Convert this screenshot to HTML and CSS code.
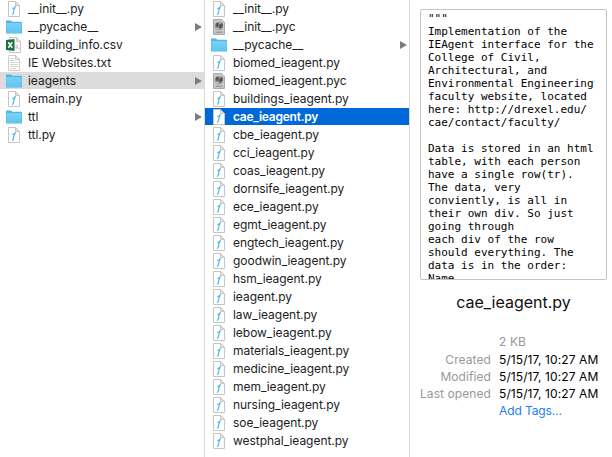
FILE: index.html
```
<!DOCTYPE html>
<html lang="en">
<head>
<meta charset="utf-8">
<title>ieagents</title>
<link rel="stylesheet" href="styles.css">
</head>
<body>
<svg class="defs" aria-hidden="true">
  <linearGradient id="blue" x1="0" y1="0" x2="0" y2="1"><stop offset="0" stop-color="#7bd1f5"/><stop offset="1" stop-color="#5fc6f0"/></linearGradient>
  <symbol id="py" viewBox="0 0 16 16">
    <path d="M2.5.5h7l4 4v11h-11z" fill="#fff" stroke="#c6c6c6"/>
    <path d="M9.5.5v4h4z" fill="#e4e4e4" stroke="#bcbcbc" stroke-width=".8"/>
    <path d="M10 5.8Q8.7 5.4 8.3 7.2L7.3 12Q7 13.3 6 13M6.4 7.3h2.8" fill="none" stroke="#45b9e8" stroke-width="1.2"/>
  </symbol>
  <symbol id="folder" viewBox="0 0 16 16">
    <path d="M0 2Q0 1.5 .6 1.5H5l1.3 1.3H15.4q.6 0 .6.6V14q0 .5-.6.5H.6Q0 14.500 0 14z" fill="#4db6e2"/>
    <path d="M.4 4h15.2v10H.4z" fill="url(#blue)"/>
  </symbol>
  <symbol id="pyc" viewBox="0 0 16 16">
    <path d="M2.5.5h8.2l2.8 2.8v12.2h-11z" fill="#c8c8c8" stroke="#a9a9a9"/>
    <path d="M10.5.5v3h3z" fill="#e5e5e5" stroke="#aaa" stroke-width=".6"/>
    <circle cx="8" cy="7" r="4" fill="#8d8d8d"/>
    <path d="M4.5 5.4Q6 3 8 4.800L7 7.500 5.600 8.300zM9 5l2.300-.7.7 3L9 9.600 7.600 8.500z" fill="#555"/>
    <path d="M5.200 9.200l3 .6M8.300 3.700l1.200 1" stroke="#ddd" stroke-width=".8"/>
    <path d="M4.500 13.200h7" stroke="#929292" stroke-width="1.200"/>
  </symbol>
  <symbol id="csv" viewBox="0 0 16 16">
    <path d="M3.5.5h7l4 4v11h-11z" fill="#fff" stroke="#c6c6c6"/>
    <path d="M10.5.5v4h4z" fill="#e6e6e6" stroke="#bcbcbc" stroke-width=".8"/>
    <path d="M0 3l8.5-1v12L0 13z" fill="#1d7044"/>
    <path d="M2.3 5.2l4 5.6M6.3 5.2l-4 5.6" stroke="#fff" stroke-width="1.5"/>
    <path d="M9.6 8.5q2-.8 2 .7v2.2M11.5 9.9q-2 0-1.9 1 .3 1 1.9-.1M13.2 10.8v1.3l-.6.7" fill="none" stroke="#aaa" stroke-width=".7"/>
  </symbol>
  <symbol id="txt" viewBox="0 0 16 16">
    <path d="M2.5.5h7l4 4v11h-11z" fill="#fff" stroke="#cecece"/>
    <path d="M9.5.5v4h4z" fill="#e9e9e9" stroke="#c2c2c2" stroke-width=".8"/>
    <path d="M4 3.5h4M4 5.5h5M4 7.5h8M4 9.5h8M4 11.5h8M4 13.5h6" stroke="#c9c9c9" stroke-width=".8"/>
  </symbol>
</svg>
<main class="finder">
  <ul class="column">
    <li><svg><use href="#py"/></svg><span>__init__.py</span></li>
    <li class="dir"><svg><use href="#folder"/></svg><span>__pycache__</span></li>
    <li><svg><use href="#csv"/></svg><span>building_info.csv</span></li>
    <li><svg><use href="#txt"/></svg><span>IE Websites.txt</span></li>
    <li class="dir open"><svg><use href="#folder"/></svg><span>ieagents</span></li>
    <li><svg><use href="#py"/></svg><span>iemain.py</span></li>
    <li class="dir"><svg><use href="#folder"/></svg><span>ttl</span></li>
    <li><svg><use href="#py"/></svg><span>ttl.py</span></li>
  </ul>
  <ul class="column">
    <li><svg><use href="#py"/></svg><span>__init__.py</span></li>
    <li><svg><use href="#pyc"/></svg><span>__init__.pyc</span></li>
    <li class="dir"><svg><use href="#folder"/></svg><span>__pycache__</span></li>
    <li><svg><use href="#py"/></svg><span>biomed_ieagent.py</span></li>
    <li><svg><use href="#pyc"/></svg><span>biomed_ieagent.pyc</span></li>
    <li><svg><use href="#py"/></svg><span>buildings_ieagent.py</span></li>
    <li class="selected"><svg><use href="#py"/></svg><span>cae_ieagent.py</span></li>
    <li><svg><use href="#py"/></svg><span>cbe_ieagent.py</span></li>
    <li><svg><use href="#py"/></svg><span>cci_ieagent.py</span></li>
    <li><svg><use href="#py"/></svg><span>coas_ieagent.py</span></li>
    <li><svg><use href="#py"/></svg><span>dornsife_ieagent.py</span></li>
    <li><svg><use href="#py"/></svg><span>ece_ieagent.py</span></li>
    <li><svg><use href="#py"/></svg><span>egmt_ieagent.py</span></li>
    <li><svg><use href="#py"/></svg><span>engtech_ieagent.py</span></li>
    <li><svg><use href="#py"/></svg><span>goodwin_ieagent.py</span></li>
    <li><svg><use href="#py"/></svg><span>hsm_ieagent.py</span></li>
    <li><svg><use href="#py"/></svg><span>ieagent.py</span></li>
    <li><svg><use href="#py"/></svg><span>law_ieagent.py</span></li>
    <li><svg><use href="#py"/></svg><span>lebow_ieagent.py</span></li>
    <li><svg><use href="#py"/></svg><span>materials_ieagent.py</span></li>
    <li><svg><use href="#py"/></svg><span>medicine_ieagent.py</span></li>
    <li><svg><use href="#py"/></svg><span>mem_ieagent.py</span></li>
    <li><svg><use href="#py"/></svg><span>nursing_ieagent.py</span></li>
    <li><svg><use href="#py"/></svg><span>soe_ieagent.py</span></li>
    <li><svg><use href="#py"/></svg><span>westphal_ieagent.py</span></li>
  </ul>
  <section class="preview">
<pre class="page">"""
Implementation of the
IEAgent interface for the
College of Civil,
Architectural, and
Environmental Engineering
faculty website, located
here: http://drexel.edu/
cae/contact/faculty/

Data is stored in an html
table, with each person
have a single row(tr).
The data, very
conviently, is all in
their own div. So just
going through
each div of the row
should everything. The
data is in the order:
Name</pre>
    <h1>cae_ieagent.py</h1>
    <dl>
      <dt></dt><dd class="size">2 KB</dd>
      <dt>Created</dt><dd>5/15/17, 10:27 AM</dd>
      <dt>Modified</dt><dd>5/15/17, 10:27 AM</dd>
      <dt>Last opened</dt><dd>5/15/17, 10:27 AM</dd>
      <dt></dt><dd class="tags">Add Tags…</dd>
    </dl>
  </section>
</main>
</body>
</html>
```
FILE: styles.css
```
* { box-sizing: border-box; }
body {
  margin: 0;
  background: #fff;
  color: #1c1c1c;
  font: 12px/17px Inter, "Liberation Sans", sans-serif;
  overflow: hidden;
}
.defs { position: absolute; width: 0; height: 0; }
.finder {
  display: grid;
  grid-template-columns: 205px 205px 202px;
  height: 457px;
}
.column {
  margin: 0;
  padding: 0;
  list-style: none;
  border-right: 1px solid #d9d9d9;
  letter-spacing: -0.04px;
}
.column li {
  display: flex;
  align-items: center;
  height: 17px;
  margin-bottom: 1px;
  padding: 0 2px 0 6px;
  white-space: nowrap;
}
.column svg {
  flex: none;
  width: 16px;
  height: 16px;
  margin-right: 6px;
}
.column li.dir::after {
  content: "";
  margin-left: auto;
  border: solid transparent;
  border-width: 4px 0 4px 7px;
  border-left-color: #7c7c7c;
}
.column li.open { background: #dcdcdc; }
.column li.selected {
  background: #0069d9;
  color: #fff;
  font-weight: 600;
  letter-spacing: -0.25px;
}
.preview { padding: 9px 5px 0 10px; }
.page {
  height: 271px;
  margin: 0;
  padding: 2px 0 0 7px;
  border: 1px solid #c4c4c4;
  border-radius: 2px;
  overflow: hidden;
  color: #000;
  font: 11px/13px "DejaVu Sans Mono", monospace;
}
h1 {
  margin: 11px 0 0;
  color: #111;
  font-size: 16px;
  font-weight: 400;
  line-height: 22px;
  text-align: center;
}
dl {
  display: grid;
  grid-template-columns: 71px 1fr;
  column-gap: 8px;
  margin: 20px 0 0;
  white-space: nowrap;
}
dt { color: #999; text-align: right; letter-spacing: 0.08px; }
dd { margin: 0; color: #000; letter-spacing: 0.1px; }
.size { height: 18px; color: #999; }
.tags { color: #1a80f5; letter-spacing: -0.1px; }
```
